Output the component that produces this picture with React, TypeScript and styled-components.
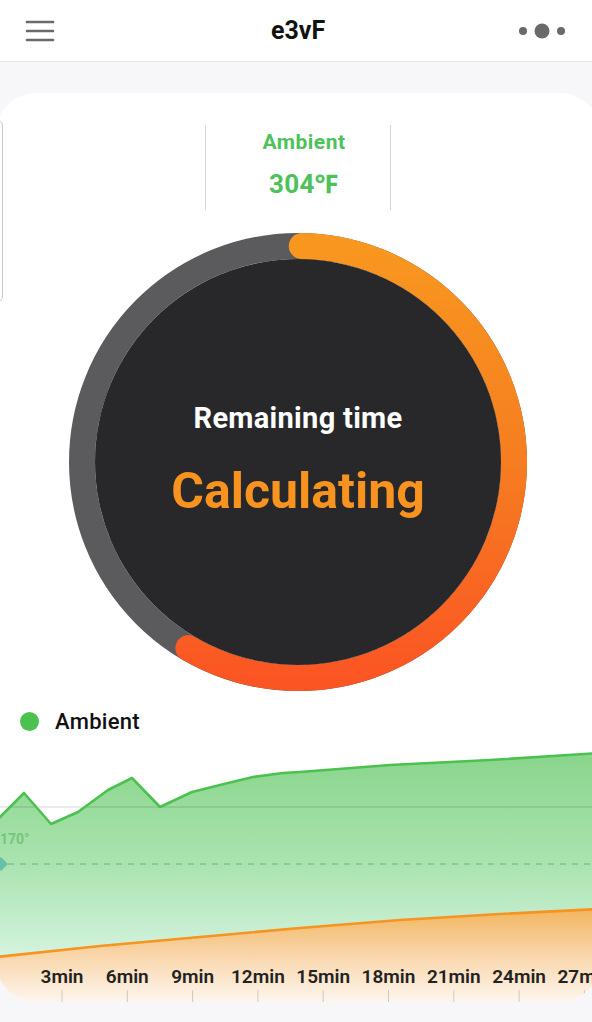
import styled, { createGlobalStyle } from "styled-components";

const GlobalStyle = createGlobalStyle`
  html, body {
    margin: 0;
    padding: 0;
    background: #f6f6f9;
    font-family: Roboto, "Noto Sans", "Liberation Sans", sans-serif;
    overflow: hidden;
  }
`;

const ticks = ["3min", "6min", "9min", "12min", "15min", "18min", "21min", "24min", "27min"];

const greenLine: [number, number][] = [
  [-4, 822], [0, 817], [24, 793], [51, 824], [78, 812], [108, 790], [132, 778],
  [160, 807], [192, 792], [220, 785], [253, 777], [283, 773], [300, 772],
  [390, 765], [490, 760], [600, 753],
];

const orangeLine: [number, number][] = [
  [-4, 957], [100, 946], [200, 937], [300, 928], [400, 920], [500, 914], [600, 909],
];

const pts = (p: [number, number][]) => p.map(([x, y]) => `${x},${y}`).join(" ");

// point on the ring, angle in degrees clockwise from 12 o'clock
const polar = (cx: number, cy: number, r: number, deg: number) => {
  const a = (deg * Math.PI) / 180;
  return [cx + r * Math.sin(a), cy - r * Math.cos(a)];
};

function MenuIcon() {
  return (
    <svg width="30" height="22" viewBox="0 0 30 22">
      <g stroke="#6a6a6a" strokeWidth="2.6" strokeLinecap="round">
        <line x1="2" y1="2" x2="28" y2="2" />
        <line x1="2" y1="11" x2="28" y2="11" />
        <line x1="2" y1="20" x2="28" y2="20" />
      </g>
    </svg>
  );
}

function MoreIcon() {
  return (
    <svg width="50" height="18" viewBox="0 0 50 18">
      <g fill="#6a6a6a">
        <circle cx="6" cy="9" r="4" />
        <circle cx="25" cy="9" r="7.5" />
        <circle cx="44" cy="9" r="4" />
      </g>
    </svg>
  );
}

function Ring() {
  const r = 216;
  const [sx, sy] = polar(229, 229, r, 1);
  const [ex, ey] = polar(229, 229, r, 210.5);
  return (
    <RingArt width="458" height="458" viewBox="0 0 458 458">
      <defs>
        <linearGradient id="arcGrad" x1="0" y1="13" x2="0" y2="445" gradientUnits="userSpaceOnUse">
          <stop offset="0" stopColor="#f8971f" />
          <stop offset="0.5" stopColor="#f67d20" />
          <stop offset="1" stopColor="#fb5523" />
        </linearGradient>
      </defs>
      <circle cx="229" cy="229" r={r} fill="none" stroke="#5b5b5e" strokeWidth="26" />
      <path
        d={`M ${sx} ${sy} A ${r} ${r} 0 1 1 ${ex} ${ey}`}
        fill="none"
        stroke="url(#arcGrad)"
        strokeWidth="26"
        strokeLinecap="round"
      />
      <circle cx="229" cy="229" r="203" fill="#28282b" />
    </RingArt>
  );
}

function Chart() {
  const greenArea = `${pts(greenLine)} ${pts([...orangeLine].reverse())}`;
  const orangeArea = `${pts(orangeLine)} 600,1002 -4,1002`;
  return (
    <ChartSvg width="604" height="262" viewBox="-4 740 604 262">
      <defs>
        <linearGradient id="greenFill" x1="0" y1="750" x2="0" y2="955" gradientUnits="userSpaceOnUse">
          <stop offset="0" stopColor="#88d58a" />
          <stop offset="0.55" stopColor="#aae3af" />
          <stop offset="1" stopColor="#d3f3de" />
        </linearGradient>
        <linearGradient id="orangeFill" x1="0" y1="910" x2="0" y2="1002" gradientUnits="userSpaceOnUse">
          <stop offset="0" stopColor="#f2b660" />
          <stop offset="0.45" stopColor="#f8d3a4" />
          <stop offset="1" stopColor="#fef6ee" />
        </linearGradient>
      </defs>
      <polygon points={greenArea} fill="url(#greenFill)" />
      <polygon points={orangeArea} fill="url(#orangeFill)" />
      <line x1="-4" y1="807" x2="600" y2="807" stroke="rgba(0,0,0,0.16)" strokeWidth="1" />
      <line x1="8" y1="864" x2="600" y2="864" stroke="rgba(70,150,120,0.45)" strokeWidth="1.5" strokeDasharray="6 6" />
      <polygon points="1,857 8,864 1,871 -6,864" fill="#6bbfa9" />
      <AxisNote x="0" y="844">170°</AxisNote>
      <polyline points={pts(greenLine)} fill="none" stroke="#4cc150" strokeWidth="2.6" strokeLinejoin="round" />
      <polyline points={pts(orangeLine)} fill="none" stroke="#f7931e" strokeWidth="2.6" strokeLinejoin="round" />
      {ticks.map((t, i) => {
        const x = 62 + i * 65.3;
        return (
          <g key={t}>
            <TickLabel x={x} y="983" textAnchor="middle">{t}</TickLabel>
            <line x1={x} y1="990" x2={x} y2="1002" stroke="#c9c9c9" strokeWidth="1" />
          </g>
        );
      })}
    </ChartSvg>
  );
}

export default function App() {
  return (
    <>
      <GlobalStyle />
      <Header>
        <MenuIcon />
        <Title>e3vF</Title>
        <MoreSlot>
          <MoreIcon />
        </MoreSlot>
      </Header>
      <Page>
        <Card>
          <EdgeTab />
          <StatsRow>
            <StatCell />
            <StatCell $divided>
              <StatLabel>Ambient</StatLabel>
              <StatValue>304℉</StatValue>
            </StatCell>
            <StatCell />
          </StatsRow>
          <RingWrap>
            <RingFace>
              <Ring />
              <RingLabel>Remaining time</RingLabel>
              <RingValue>Calculating</RingValue>
            </RingFace>
          </RingWrap>
          <Legend>
            <LegendDot />
            <LegendText>Ambient</LegendText>
          </Legend>
          <Chart />
        </Card>
      </Page>
    </>
  );
}

const Header = styled.header`
  display: grid;
  grid-template-columns: 1fr auto 1fr;
  align-items: center;
  height: 61px;
  padding: 0 25px 0 25px;
  background: #ffffff;
  border-bottom: 1px solid #e7e7eb;
`;

const Title = styled.h1`
  margin: 0 0 0 4px;
  font-size: 25px;
  font-weight: 700;
  color: #111;
`;

const MoreSlot = styled.div`
  display: flex;
  justify-content: flex-end;
`;

const Page = styled.main`
  padding-top: 31px;
  background: #f7f7fa;
  height: 960px;
`;

const Card = styled.section`
  position: relative;
  width: 604px;
  height: 909px;
  margin-left: -4px;
  background: #ffffff;
  border-radius: 40px;
  overflow: hidden;
`;

const EdgeTab = styled.div`
  position: absolute;
  left: -23px;
  top: 26px;
  width: 28px;
  height: 182px;
  border: 1.5px solid #c9c9c9;
  border-radius: 7px;
`;

const StatsRow = styled.div`
  display: grid;
  grid-template-columns: repeat(3, 186px);
  justify-content: center;
  margin-top: 32px;
  height: 85px;
`;

const StatCell = styled.div<{ $divided?: boolean }>`
  display: flex;
  flex-direction: column;
  align-items: center;
  padding: 5px 0 0 ${(p) => (p.$divided ? "12px" : "0")};
  gap: 15px;
  border-left: ${(p) => (p.$divided ? "1.5px solid #d4d4d4" : "none")};
  border-right: ${(p) => (p.$divided ? "1.5px solid #d4d4d4" : "none")};
`;

const StatLabel = styled.div`
  font-size: 21px;
  line-height: 24px;
  font-weight: 700;
  letter-spacing: 0.5px;
  color: #4dc25a;
`;

const StatValue = styled.div`
  font-size: 26px;
  line-height: 30px;
  font-weight: 700;
  letter-spacing: 0.3px;
  color: #4dc25a;
`;

const RingWrap = styled.div`
  display: flex;
  justify-content: center;
  margin-top: 23px;
`;

const RingFace = styled.div`
  position: relative;
  width: 458px;
  height: 458px;
  display: flex;
  flex-direction: column;
  align-items: center;
  justify-content: center;
  gap: 30px;
  padding-bottom: 4px;
  box-sizing: border-box;
`;

const RingArt = styled.svg`
  position: absolute;
  inset: 0;
`;

const RingLabel = styled.div`
  position: relative;
  font-size: 29px;
  line-height: 32px;
  font-weight: 700;
  letter-spacing: 0.3px;
  color: #ffffff;
`;

const RingValue = styled.div`
  position: relative;
  font-size: 50px;
  line-height: 54px;
  font-weight: 700;
  color: #f7931e;
`;

const Legend = styled.div`
  display: flex;
  align-items: center;
  gap: 16px;
  margin-top: 19px;
  padding-left: 24px;
  height: 22px;
`;

const LegendDot = styled.span`
  width: 19px;
  height: 19px;
  border-radius: 50%;
  background: #4cc150;
`;

const LegendText = styled.span`
  font-size: 22px;
  font-weight: 500;
  letter-spacing: 0.3px;
  color: #111;
`;

const ChartSvg = styled.svg`
  display: block;
  margin-top: 8px;
`;

const TickLabel = styled.text`
  font-size: 19px;
  font-weight: 600;
  fill: #222;
  font-family: Roboto, "Liberation Sans", sans-serif;
`;

const AxisNote = styled.text`
  font-size: 14px;
  font-weight: 700;
  fill: rgba(70, 170, 90, 0.5);
  font-family: Roboto, "Liberation Sans", sans-serif;
`;
